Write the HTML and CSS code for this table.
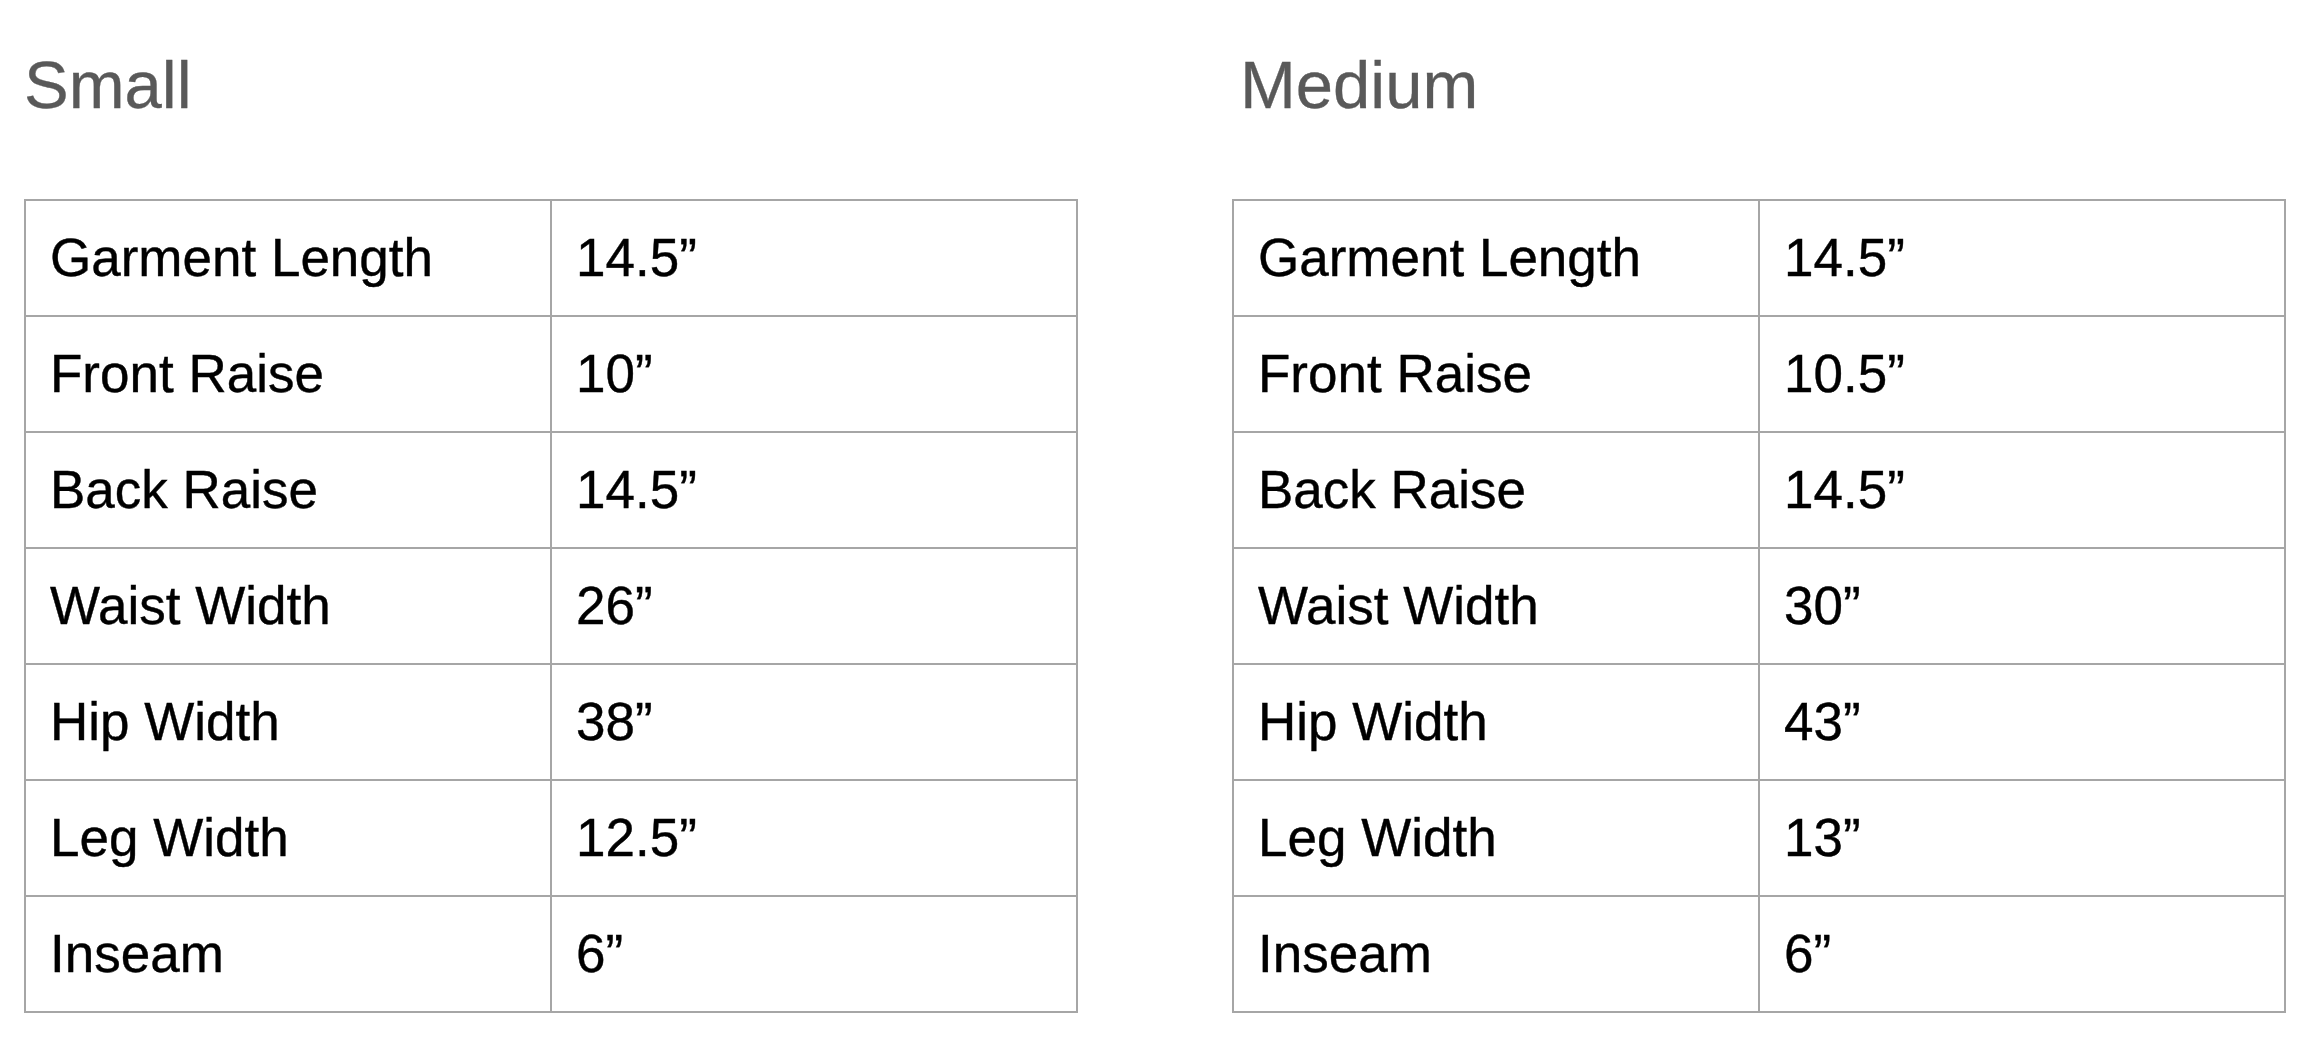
FILE: index.html
```html
<!DOCTYPE html>
<html lang="en">
<head>
<meta charset="utf-8">
<title>Size chart</title>
<link rel="stylesheet" href="styles.css">
</head>
<body>
<main class="page">
  <section class="size">
    <h2 class="size-title">Small</h2>
    <div class="chart">
      <div class="cell label">Garment Length</div><div class="cell value">14.5”</div>
      <div class="cell label">Front Raise</div><div class="cell value">10”</div>
      <div class="cell label">Back Raise</div><div class="cell value">14.5”</div>
      <div class="cell label">Waist Width</div><div class="cell value">26”</div>
      <div class="cell label">Hip Width</div><div class="cell value">38”</div>
      <div class="cell label">Leg Width</div><div class="cell value">12.5”</div>
      <div class="cell label">Inseam</div><div class="cell value">6”</div>
    </div>
  </section>
  <section class="size">
    <h2 class="size-title size-title--indent">Medium</h2>
    <div class="chart">
      <div class="cell label">Garment Length</div><div class="cell value">14.5”</div>
      <div class="cell label">Front Raise</div><div class="cell value">10.5”</div>
      <div class="cell label">Back Raise</div><div class="cell value">14.5”</div>
      <div class="cell label">Waist Width</div><div class="cell value">30”</div>
      <div class="cell label">Hip Width</div><div class="cell value">43”</div>
      <div class="cell label">Leg Width</div><div class="cell value">13”</div>
      <div class="cell label">Inseam</div><div class="cell value">6”</div>
    </div>
  </section>
</main>
</body>
</html>
```
FILE: styles.css
```css
* { box-sizing: border-box; }

html, body {
  margin: 0;
  padding: 0;
  background: #ffffff;
}

body {
  font-family: "Liberation Sans", Arial, sans-serif;
  color: #000000;
}

.page {
  display: flex;
  gap: 154px;
  padding-left: 24px;
}

.size {
  width: 1054px;
  flex: none;
}

.size-title {
  margin: 47px 0 77px;
  height: 75px;
  font-size: 67px;
  line-height: 75px;
  font-weight: 400;
  color: #595959;
  -webkit-text-stroke: 0.3px #595959;
}

.size-title--indent {
  padding-left: 8px;
}

.chart {
  display: grid;
  grid-template-columns: 526px 526px;
  border-top: 2px solid #a6a6a6;
  border-left: 2px solid #a6a6a6;
}

.cell {
  height: 116px;
  display: flex;
  align-items: center;
  padding-left: 24px;
  padding-bottom: 2px;
  border-right: 2px solid #a6a6a6;
  border-bottom: 2px solid #a6a6a6;
  font-size: 53px;
  line-height: normal;
  white-space: nowrap;
  -webkit-text-stroke: 0.4px #000000;
}
```
